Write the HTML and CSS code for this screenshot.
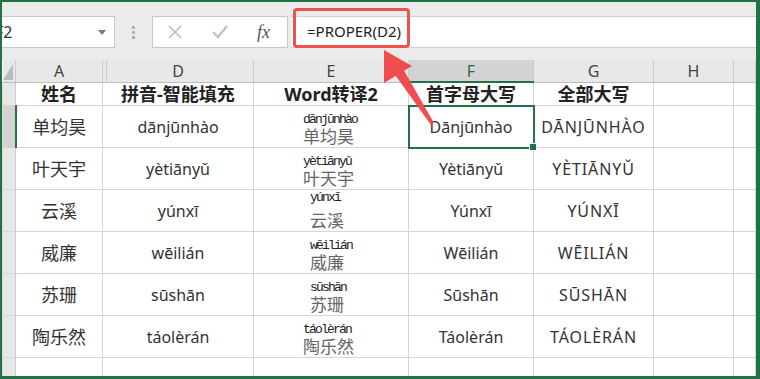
FILE: index.html
```html
<!DOCTYPE html>
<html lang="zh-CN">
<head>
    <meta charset="UTF-8">
    <title>PROPER 函数</title>
    <link rel="stylesheet" href="styles.css">
</head>
<body>
    <div class="frame">
        <div class="toolbar">
            <div class="namebox">
                <span class="cellref">F2</span>
                <span class="caret"></span>
            </div>
            <div class="grip"><span></span><span></span><span></span></div>
            <div class="fxbox">
                <svg class="icon-x" width="16" height="16" viewBox="0 0 16 16">
                    <path d="M2 2 L14 14 M14 2 L2 14" stroke="#bdbdbd" stroke-width="1.6" fill="none"/>
                </svg>
                <svg class="icon-ok" width="18" height="16" viewBox="0 0 18 16">
                    <path d="M2 8 L7 13 L16 2" stroke="#c2c2c2" stroke-width="2.4" fill="none"/>
                </svg>
                <span class="fx">fx</span>
            </div>
            <div class="formula">=PROPER(D2)</div>
        </div>

        <table class="sheet">
            <colgroup>
                <col style="width:13px">
                <col style="width:87px">
                <col style="width:151px">
                <col style="width:155px">
                <col style="width:125px">
                <col style="width:120px">
                <col style="width:80px">
                <col>
            </colgroup>
            <tr class="heads">
                <th class="corner"></th>
                <th class="hidden-after">A</th>
                <th>D</th>
                <th>E</th>
                <th class="active">F</th>
                <th>G</th>
                <th>H</th>
                <th></th>
            </tr>
            <tr class="title">
                <td class="rh"></td>
                <td>姓名</td>
                <td>拼音-智能填充</td>
                <td>Word转译2</td>
                <td>首字母大写</td>
                <td>全部大写</td>
                <td></td>
                <td></td>
            </tr>
            <tr>
                <td class="rh active"></td>
                <td class="cn">单均昊</td>
                <td>dānjūnhào</td>
                <td class="ruby"><div><span class="py">dānjūnhào</span><span class="hz">单均昊</span></div></td>
                <td class="selected">Dānjūnhào</td>
                <td class="caps">DĀNJŪNHÀO</td>
                <td></td>
                <td></td>
            </tr>
            <tr>
                <td class="rh"></td>
                <td class="cn">叶天宇</td>
                <td>yètiānyǔ</td>
                <td class="ruby"><div><span class="py">yètiānyǔ</span><span class="hz">叶天宇</span></div></td>
                <td>Yètiānyǔ</td>
                <td class="caps">YÈTIĀNYǓ</td>
                <td></td>
                <td></td>
            </tr>
            <tr>
                <td class="rh"></td>
                <td class="cn">云溪</td>
                <td>yúnxī</td>
                <td class="ruby"><div class="raised"><span class="py">yúnxī</span><span class="hz">云溪</span></div></td>
                <td>Yúnxī</td>
                <td class="caps">YÚNXĪ</td>
                <td></td>
                <td></td>
            </tr>
            <tr>
                <td class="rh"></td>
                <td class="cn">威廉</td>
                <td>wēilián</td>
                <td class="ruby"><div class="wide"><span class="py">wēilián</span><span class="hz">威廉</span></div></td>
                <td>Wēilián</td>
                <td class="caps">WĒILIÁN</td>
                <td></td>
                <td></td>
            </tr>
            <tr>
                <td class="rh"></td>
                <td class="cn">苏珊</td>
                <td>sūshān</td>
                <td class="ruby"><div class="wide"><span class="py">sūshān</span><span class="hz">苏珊</span></div></td>
                <td>Sūshān</td>
                <td class="caps">SŪSHĀN</td>
                <td></td>
                <td></td>
            </tr>
            <tr>
                <td class="rh"></td>
                <td class="cn">陶乐然</td>
                <td>táolèrán</td>
                <td class="ruby"><div><span class="py">táolèrán</span><span class="hz">陶乐然</span></div></td>
                <td>Táolèrán</td>
                <td class="caps">TÁOLÈRÁN</td>
                <td></td>
                <td></td>
            </tr>
            <tr class="last">
                <td class="rh"></td>
                <td></td>
                <td></td>
                <td></td>
                <td></td>
                <td></td>
                <td></td>
                <td></td>
            </tr>
        </table>

        <!-- 公式高亮框和箭头 -->
        <div class="callout"></div>
        <svg class="arrow" width="760" height="379" viewBox="0 0 760 379">
            <polygon points="384,50 412,66 384,83" fill="#f04e4e"/>
            <polygon points="393,72 402,67 434,123 431,125" fill="#f04e4e"/>
        </svg>
    </div>
</body>
</html>
```

FILE: styles.css
```css
body {
    margin: 0;
    font-family: "Noto Sans", "Noto Sans CJK SC", sans-serif;
    color: #333;
    background: #fff;
}
.frame {
    width: 760px;
    height: 379px;
    box-sizing: border-box;
    border: 2px solid #217346;
    border-right-width: 4px;
    border-bottom-width: 3px;
    position: relative;
    overflow: hidden;
    background: #fff;
}
.toolbar {
    height: 58px;
    box-sizing: border-box;
    padding-top: 14px;
    background: #ebebeb;
    display: flex;
    align-items: flex-start;
}
.namebox {
    width: 113px;
    height: 32px;
    box-sizing: border-box;
    background: #fff;
    border: 1px solid #c8c8c8;
    border-left: none;
    display: flex;
    align-items: center;
    justify-content: space-between;
    padding-right: 8px;
    font-size: 16px;
    color: #333;
    overflow: hidden;
}
.cellref {
    margin-left: -7px;
}
.caret {
    width: 0;
    height: 0;
    border-left: 4px solid transparent;
    border-right: 4px solid transparent;
    border-top: 5px solid #7a7a7a;
}
.grip {
    width: 37px;
    height: 32px;
    display: flex;
    flex-direction: column;
    align-items: center;
    justify-content: center;
    gap: 2px;
}
.grip span {
    width: 3px;
    height: 3px;
    background: #b0b0b0;
}
.fxbox {
    width: 136px;
    height: 32px;
    box-sizing: border-box;
    background: #fff;
    border: 1px solid #c8c8c8;
    display: flex;
    align-items: center;
    padding-left: 14px;
}
.icon-ok {
    margin-left: 28px;
}
.fx {
    margin-left: 28px;
    font-family: "Liberation Serif", serif;
    font-style: italic;
    font-size: 18px;
    color: #555;
}
.formula {
    flex: 1;
    height: 32px;
    box-sizing: border-box;
    margin-left: 3px;
    background: #fff;
    border-top: 1px solid #d0d0d0;
    border-bottom: 1px solid #d0d0d0;
    padding-left: 16px;
    font-size: 15px;
    line-height: 29px;
    color: #222;
}
.sheet {
    border-collapse: collapse;
    table-layout: fixed;
    width: 754px;
}
.sheet th {
    height: 21px;
    padding: 0;
    background: #e8e8e8;
    border-right: 1px solid #cdcdcd;
    border-bottom: 1px solid #bdbdbd;
    font-weight: normal;
    font-size: 16px;
    color: #444;
    line-height: 20px;
}
.sheet th.active {
    background: #d3d3d3;
    color: #2a6b45;
    border-bottom: 2px solid #217346;
}
.sheet th.corner {
    position: relative;
}
.sheet th.corner::after {
    content: "";
    position: absolute;
    right: 2px;
    bottom: 2px;
    border-left: 10px solid transparent;
    border-bottom: 16px solid #bababa;
}
.sheet th.hidden-after {
    position: relative;
}
.sheet th.hidden-after::after {
    content: "";
    position: absolute;
    right: -5px;
    top: 0;
    bottom: 0;
    width: 1px;
    background: #cdcdcd;
}
.sheet td {
    height: 41px;
    padding: 0;
    border: 1px solid #d6d6d6;
    text-align: center;
    font-size: 16px;
    line-height: 20px;
    white-space: nowrap;
    overflow: visible;
}
.sheet td.cn {
    font-size: 18px;
}
.sheet td.caps {
    letter-spacing: 0.9px;
}
.sheet td.rh {
    background: #e8e8e8;
    border-right: 1px solid #cdcdcd;
    border-top-color: #dcdcdc;
}
.sheet td.rh.active {
    background: #d3d3d3;
    border-right: 2px solid #217346;
}
.sheet tr.title td {
    height: 22px;
    font-weight: bold;
    font-size: 18px;
    line-height: 20px;
    color: #222;
}
.sheet tr.last td {
    height: 19px;
}
.sheet td.selected {
    position: relative;
    outline: 2px solid #217346;
    outline-offset: -1px;
}
.sheet td.selected::after {
    content: "";
    position: absolute;
    right: -4px;
    bottom: -4px;
    width: 6px;
    height: 6px;
    background: #217346;
    border: 1px solid #fff;
}
.sheet td.ruby {
    vertical-align: bottom;
}
.ruby div {
    display: flex;
    flex-direction: column;
    align-items: flex-start;
    width: 56px;
    margin: 0 auto;
    text-align: left;
    padding-bottom: 1px;
}
.ruby div.wide {
    width: 56px;
    padding-left: 14px;
}
.ruby div.raised {
    padding-left: 14px;
}
.ruby div.raised .py {
    margin-top: -6px;
    margin-bottom: 6px;
}
.py {
    font-family: "Liberation Mono", monospace;
    font-size: 13px;
    letter-spacing: -1.8px;
    line-height: 15px;
    color: #222;
}
.hz {
    font-size: 17px;
    line-height: 19px;
    color: #666;
}
.callout {
    position: absolute;
    left: 291px;
    top: 6px;
    width: 111px;
    height: 34px;
    border: 3px solid #f0504f;
    border-radius: 4px;
}
.arrow {
    position: absolute;
    left: -2px;
    top: -2px;
    pointer-events: none;
}
```
